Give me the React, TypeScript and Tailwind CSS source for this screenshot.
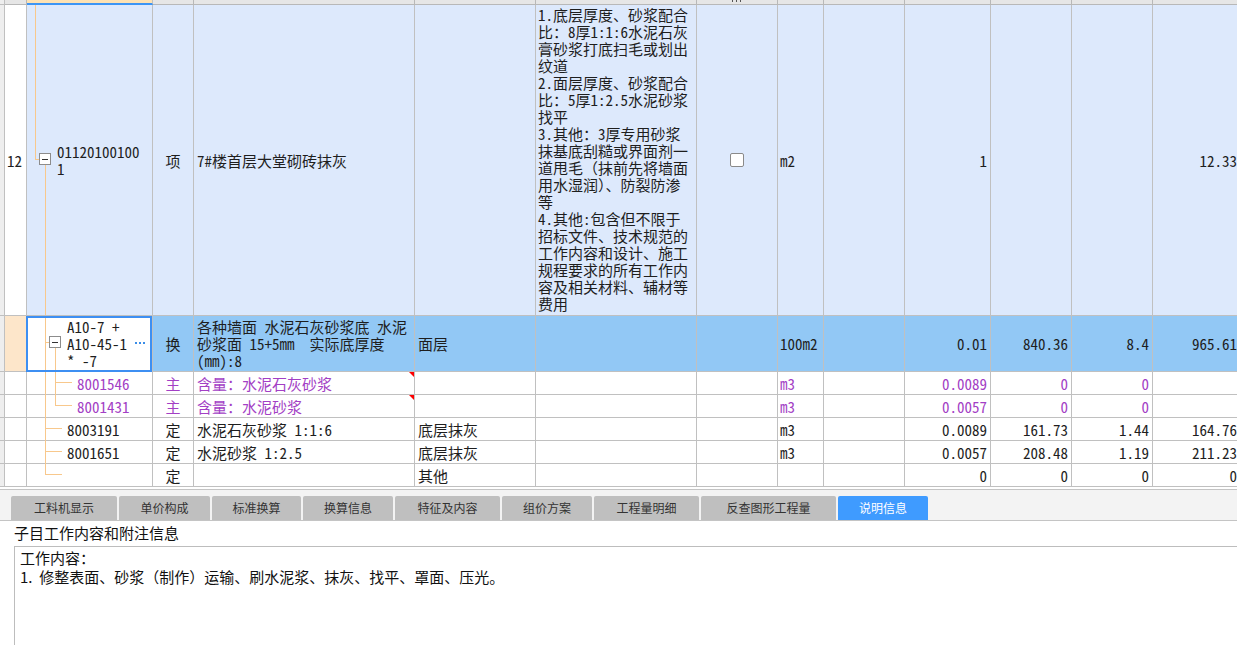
import React from "react";

const F = { fontFamily: '"Noto Sans CJK SC", "Noto Sans", sans-serif' };
const G = { fontFamily: '"Noto Sans Mono CJK SC", "Noto Sans CJK SC", monospace' };

const cell = "shrink-0 border-r border-[#c0c0c0] flex items-center overflow-hidden relative";
const C = {
  rn: "w-[22px]",
  code: "w-[126px]",
  type: "w-[41px]",
  name: "w-[221px]",
  c4: "w-[121px]",
  desc: "w-[161px]",
  chk: "w-[81px]",
  unit: "w-[46px]",
  c8: "w-[81px]",
  qty: "w-[86px]",
  price: "w-[81px]",
  c11: "w-[81px]",
  c12: "w-[88px]",
};

const TL = "absolute bg-[#f8c88c]";

function Box({ className }: { className: string }) {
  return (
    <div className={`absolute w-[12px] h-[12px] border border-[#8c8c8c] bg-white flex items-center justify-center ${className}`}>
      <div className="w-[6px] h-[1px] bg-[#333]" />
    </div>
  );
}

function Strip() {
  return <div className="w-[5px] shrink-0 bg-[#eeeeee] border-r border-[#c0c0c0]" />;
}

const desc = [
  "1.底层厚度、砂浆配合",
  "比：8厚1:1:6水泥石灰",
  "膏砂浆打底扫毛或划出",
  "纹道",
  "2.面层厚度、砂浆配合",
  "比：5厚1:2.5水泥砂浆",
  "找平",
  "3.其他：3厚专用砂浆",
  "抹基底刮糙或界面剂一",
  "道甩毛（抹前先将墙面",
  "用水湿润）、防裂防渗",
  "等",
  "4.其他:包含但不限于",
  "招标文件、技术规范的",
  "工作内容和设计、施工",
  "规程要求的所有工作内",
  "容及相关材料、辅材等",
  "费用",
];

type SubRow = {
  code: string;
  type: string;
  name: string;
  c4: string;
  unit: string;
  qty: string;
  price: string;
  c11: string;
  c12: string;
  purple?: boolean;
  flag?: boolean;
  tree: React.ReactNode;
  indent: string;
};

const subRows: SubRow[] = [
  {
    code: "8001546", type: "主", name: "含量：水泥石灰砂浆", c4: "", unit: "m3", qty: "0.0089", price: "0", c11: "0", c12: "",
    purple: true, flag: true, indent: "pl-[50px]",
    tree: (
      <>
        <div className={`${TL} left-[18px] top-0 w-[1px] h-[23px]`} />
        <div className={`${TL} left-[28px] top-0 w-[1px] h-[23px]`} />
        <div className={`${TL} left-[28px] top-[10px] w-[17px] h-[1px]`} />
      </>
    ),
  },
  {
    code: "8001431", type: "主", name: "含量：水泥砂浆", c4: "", unit: "m3", qty: "0.0057", price: "0", c11: "0", c12: "",
    purple: true, flag: true, indent: "pl-[50px]",
    tree: (
      <>
        <div className={`${TL} left-[18px] top-0 w-[1px] h-[23px]`} />
        <div className={`${TL} left-[28px] top-0 w-[1px] h-[11px]`} />
        <div className={`${TL} left-[28px] top-[10px] w-[17px] h-[1px]`} />
      </>
    ),
  },
  {
    code: "8003191", type: "定", name: "水泥石灰砂浆 1:1:6", c4: "底层抹灰", unit: "m3", qty: "0.0089", price: "161.73", c11: "1.44", c12: "164.76",
    indent: "pl-[40px]",
    tree: (
      <>
        <div className={`${TL} left-[18px] top-0 w-[1px] h-[23px]`} />
        <div className={`${TL} left-[18px] top-[10px] w-[17px] h-[1px]`} />
      </>
    ),
  },
  {
    code: "8001651", type: "定", name: "水泥砂浆 1:2.5", c4: "底层抹灰", unit: "m3", qty: "0.0057", price: "208.48", c11: "1.19", c12: "211.23",
    indent: "pl-[40px]",
    tree: (
      <>
        <div className={`${TL} left-[18px] top-0 w-[1px] h-[23px]`} />
        <div className={`${TL} left-[18px] top-[10px] w-[17px] h-[1px]`} />
      </>
    ),
  },
  {
    code: "", type: "定", name: "", c4: "其他", unit: "", qty: "0", price: "0", c11: "0", c12: "0",
    indent: "pl-[40px]",
    tree: (
      <>
        <div className={`${TL} left-[18px] top-0 w-[1px] h-[11px]`} />
        <div className={`${TL} left-[18px] top-[10px] w-[17px] h-[1px]`} />
      </>
    ),
  },
];

const tabs = [
  { t: "工料机显示", w: "w-[106px]" },
  { t: "单价构成", w: "w-[91px]" },
  { t: "标准换算", w: "w-[89px]" },
  { t: "换算信息", w: "w-[90px]" },
  { t: "特征及内容", w: "w-[105px]" },
  { t: "组价方案", w: "w-[90px]" },
  { t: "工程量明细", w: "w-[105px]" },
  { t: "反查图形工程量", w: "w-[135px]" },
  { t: "说明信息", w: "w-[90px]", active: true },
];

export default function App() {
  return (
    <div className="w-[1237px] h-[645px] overflow-hidden bg-white text-[#1e1e1e]" style={F}>
      {/* grid */}
      <div className="text-[15px] leading-[17px] w-[1260px]" style={G}>
        {/* header strip */}
        <div className="flex h-[5px] bg-[#e6e6e6]">
          <div className="w-[5px] shrink-0 bg-[#eeeeee] border-r border-b border-[#c0c0c0]" />
          <div className={`${C.rn} shrink-0 border-r border-b border-[#b8b8b8]`} />
          <div className={`${C.code} shrink-0 bg-[#fde2b4] border-r border-[#c0c0c0] border-b-2 border-b-[#3c95f5]`} />
          <div className={`${C.type} shrink-0 border-r border-b border-[#b8b8b8]`} />
          <div className={`${C.name} shrink-0 border-r border-b border-[#b8b8b8]`} />
          <div className={`${C.c4} shrink-0 border-r border-b border-[#b8b8b8]`} />
          <div className={`${C.desc} shrink-0 border-r border-b border-[#b8b8b8]`} />
          <div className={`${C.chk} shrink-0 border-r border-b border-[#b8b8b8] relative`}>
            <div className="absolute left-[35px] top-0 w-[1px] h-[2px] bg-[#555]" />
            <div className="absolute left-[39px] top-0 w-[1px] h-[2px] bg-[#555]" />
            <div className="absolute left-[43px] top-0 w-[1px] h-[2px] bg-[#555]" />
          </div>
          <div className={`${C.unit} shrink-0 border-r border-b border-[#b8b8b8]`} />
          <div className={`${C.c8} shrink-0 border-r border-b border-[#b8b8b8]`} />
          <div className={`${C.qty} shrink-0 border-r border-b border-[#b8b8b8]`} />
          <div className={`${C.price} shrink-0 border-r border-b border-[#b8b8b8]`} />
          <div className={`${C.c11} shrink-0 border-r border-b border-[#b8b8b8]`} />
          <div className={`${C.c12} shrink-0 border-r border-b border-[#b8b8b8]`} />
        </div>

        {/* row 12 */}
        <div className="flex h-[311px] border-b border-[#c0c0c0]">
          <Strip />
          <div className={`${cell} ${C.rn} bg-white pl-[2px]`}>12</div>
          <div className={`${cell} ${C.code} bg-[#dde9fc] pl-[30px]`}>
            <div className={`${TL} left-[8px] top-0 w-[1px] h-[154px]`} />
            <div className={`${TL} left-[8px] top-[154px] w-[5px] h-[1px]`} />
            <Box className="left-[12px] top-[148px]" />
            <div className={`${TL} left-[18px] top-[160px] w-[1px] h-[152px]`} />
            <div>
              <div>01120100100</div>
              <div>1</div>
            </div>
          </div>
          <div className={`${cell} ${C.type} bg-[#dde9fc] justify-center`}>项</div>
          <div className={`${cell} ${C.name} bg-[#dde9fc] pl-[3px]`}>7#楼首层大堂砌砖抹灰</div>
          <div className={`${cell} ${C.c4} bg-[#dde9fc]`} />
          <div className={`${cell} ${C.desc} bg-[#dde9fc] pl-[2px] !items-start pt-[1px]`}>
            <div>
              {desc.map((l, i) => (
                <div key={i} className="whitespace-pre">{l}</div>
              ))}
            </div>
          </div>
          <div className={`${cell} ${C.chk} bg-[#dde9fc] justify-center`}>
            <div className="w-[14px] h-[14px] bg-white border border-[#8a8a8a] rounded-[2px]" />
          </div>
          <div className={`${cell} ${C.unit} bg-[#dde9fc] pl-[2px]`}>m2</div>
          <div className={`${cell} ${C.c8} bg-[#dde9fc]`} />
          <div className={`${cell} ${C.qty} bg-[#dde9fc] justify-end pr-[3px]`}>1</div>
          <div className={`${cell} ${C.price} bg-[#dde9fc]`} />
          <div className={`${cell} ${C.c11} bg-[#dde9fc]`} />
          <div className={`${cell} ${C.c12} bg-[#dde9fc] justify-end pr-[3px]`}>12.33</div>
        </div>

        {/* A10 row */}
        <div className="flex h-[56px] border-b border-[#c0c0c0]">
          <Strip />
          <div className={`${cell} ${C.rn} bg-[#fde6ca]`} />
          <div className={`${cell} ${C.code} bg-white pl-[40px] !overflow-visible`}>
            <div className={`${TL} left-[18px] top-0 w-[1px] h-[56px]`} />
            <div className={`${TL} left-[18px] top-[26px] w-[5px] h-[1px]`} />
            <Box className="left-[22px] top-[20px]" />
            <div className={`${TL} left-[28px] top-[32px] w-[1px] h-[24px]`} />
            <div className="whitespace-pre">
              <div>A10-7 +</div>
              <div>A10-45-1</div>
              <div>* -7</div>
            </div>
            <div className="absolute left-[108px] top-[26px] flex gap-[2px]">
              <div className="w-[2px] h-[2px] bg-[#3a8de8]" />
              <div className="w-[2px] h-[2px] bg-[#3a8de8]" />
              <div className="w-[2px] h-[2px] bg-[#3a8de8]" />
            </div>
            <div className="absolute left-[-1px] top-0 right-0 bottom-[-1px] border-2 border-[#3d8ff2]" />
          </div>
          <div className={`${cell} ${C.type} bg-[#92c8f5] justify-center`}>换</div>
          <div className={`${cell} ${C.name} bg-[#92c8f5] pl-[3px]`}>
            <div className="whitespace-pre">
              <div>各种墙面 水泥石灰砂浆底 水泥</div>
              <div>砂浆面 15+5mm  实际底厚度</div>
              <div>(mm):8</div>
            </div>
          </div>
          <div className={`${cell} ${C.c4} bg-[#92c8f5] pl-[3px]`}>面层</div>
          <div className={`${cell} ${C.desc} bg-[#92c8f5]`} />
          <div className={`${cell} ${C.chk} bg-[#92c8f5]`} />
          <div className={`${cell} ${C.unit} bg-[#92c8f5] pl-[2px]`}>100m2</div>
          <div className={`${cell} ${C.c8} bg-[#92c8f5]`} />
          <div className={`${cell} ${C.qty} bg-[#92c8f5] justify-end pr-[3px]`}>0.01</div>
          <div className={`${cell} ${C.price} bg-[#92c8f5] justify-end pr-[3px]`}>840.36</div>
          <div className={`${cell} ${C.c11} bg-[#92c8f5] justify-end pr-[3px]`}>8.4</div>
          <div className={`${cell} ${C.c12} bg-[#92c8f5] justify-end pr-[3px]`}>965.61</div>
        </div>

        {subRows.map((r, i) => {
          const tc = r.purple ? "text-[#a33fc5]" : "";
          return (
            <div key={i} className={`flex h-[23px] border-b border-[#c0c0c0] ${tc}`}>
              <Strip />
              <div className={`${cell} ${C.rn}`} />
              <div className={`${cell} ${C.code} ${r.indent} !overflow-visible`}>
                {r.tree}
                <span className="relative">{r.code}</span>
              </div>
              <div className={`${cell} ${C.type} justify-center`}>{r.type}</div>
              <div className={`${cell} ${C.name} pl-[3px]`}>
                <span className="whitespace-pre">{r.name}</span>
                {r.flag && (
                  <div className="absolute right-0 top-0 w-0 h-0 border-t-[5px] border-t-[#ff0000] border-l-[5px] border-l-transparent" />
                )}
              </div>
              <div className={`${cell} ${C.c4} pl-[3px]`}>{r.c4}</div>
              <div className={`${cell} ${C.desc}`} />
              <div className={`${cell} ${C.chk}`} />
              <div className={`${cell} ${C.unit} pl-[2px]`}>{r.unit}</div>
              <div className={`${cell} ${C.c8}`} />
              <div className={`${cell} ${C.qty} justify-end pr-[3px]`}>{r.qty}</div>
              <div className={`${cell} ${C.price} justify-end pr-[3px]`}>{r.price}</div>
              <div className={`${cell} ${C.c11} justify-end pr-[3px]`}>{r.c11}</div>
              <div className={`${cell} ${C.c12} justify-end pr-[3px]`}>{r.c12}</div>
            </div>
          );
        })}
        <div className="h-[2px]" />
      </div>

      {/* tab bar */}
      <div className="border-t border-b border-[#c4c4c4] bg-[#f3f3f3] h-[32px] flex items-end pl-[11px] gap-[2px]">
        {tabs.map((t) => (
          <div
            key={t.t}
            className={`${t.w} h-[24px] rounded-t-[2px] flex items-center justify-center text-[12px] ${
              t.active ? "bg-[#3f9bff] text-white" : "bg-[#bfbfbf] text-[#333]"
            }`}
          >
            {t.t}
          </div>
        ))}
      </div>

      {/* info */}
      <div className="h-[25px] flex items-center pl-[14px] text-[15px] text-[#111]">子目工作内容和附注信息</div>
      <div className="ml-[14px] -mr-[4px] h-[200px] border border-[#bdbdbd] pl-[5px] pt-[1px] text-[15px] leading-[19px] text-[#111] whitespace-pre">
        <div>工作内容：</div>
        <div>1.  修整表面、砂浆（制作）运输、刷水泥浆、抹灰、找平、罩面、压光。</div>
      </div>
    </div>
  );
}
